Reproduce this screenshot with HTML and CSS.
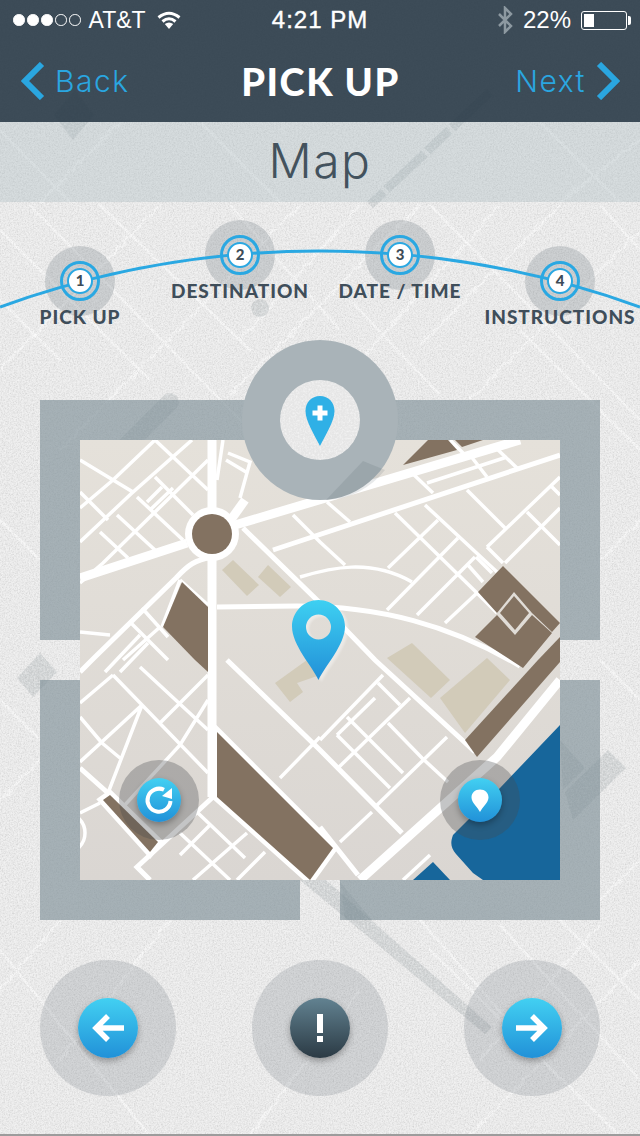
FILE: index.html
```html
<!DOCTYPE html>
<html lang="en">
  <head>
    <meta charset="UTF-8" />
    <meta name="viewport" content="width=device-width, initial-scale=1.0" />
    <title>Pick Up - Map</title>
    <link rel="stylesheet" href="styles.css">
  </head>
  <body>
    <div class="page">
      <!-- paper texture, worn street lines and faded shapes behind everything -->
      <svg class="paper" width="640" height="1136" viewBox="0 0 640 1136">
        <defs>
          <filter id="grain" x="0" y="0" width="100%" height="100%">
            <feTurbulence type="fractalNoise" baseFrequency="0.75" numOctaves="3" seed="4" />
            <feColorMatrix type="matrix" values="0 0 0 0 0.4  0 0 0 0 0.4  0 0 0 0 0.4  1.8 0 0 0 -0.72" />
          </filter>
          <filter id="grainLight" x="0" y="0" width="100%" height="100%">
            <feTurbulence type="fractalNoise" baseFrequency="0.55" numOctaves="2" seed="11" />
            <feColorMatrix type="matrix" values="0 0 0 0 1  0 0 0 0 1  0 0 0 0 1  0 2.2 0 0 -0.85" />
          </filter>
          <filter id="rough" x="-5%" y="-5%" width="110%" height="110%">
            <feTurbulence type="fractalNoise" baseFrequency="0.12" numOctaves="2" seed="7" />
            <feDisplacementMap in="SourceGraphic" scale="5" />
          </filter>
        </defs>
        <rect class="paper-base" width="640" height="1136" />
        <g class="worn-lines" filter="url(#rough)">
          <path d="M0 230 L150 380 M30 205 L240 420 M160 205 L0 370 M300 205 L60 450 M420 205 L230 395" />
          <path d="M430 205 L640 420 M560 205 L420 345 M640 230 L470 400 M520 330 L640 450 M600 205 L640 250" />
          <path d="M100 205 L250 350 M230 205 L340 330 M360 205 L240 340 M500 205 L360 360 M0 300 L60 360 M350 300 L440 395" />
          <path d="M0 520 L40 560 M0 700 L40 740 M40 760 L0 800 M0 950 L150 1136 M60 920 L0 990" />
          <path d="M600 560 L640 520 M600 660 L640 700 M640 860 L600 900 M470 1136 L640 960 M430 950 L620 1136 M560 920 L640 1000" />
          <path d="M170 920 L60 1060 M250 1136 L360 990 M420 920 L560 1080 M500 925 L640 1080 M600 925 L480 1060" />
          <path d="M0 130 L70 202 M120 122 L40 202 M200 122 L280 202 M540 122 L620 202 M640 140 L560 202" />
        </g>
        <g class="faded">
          <polygon points="75,90 94,115 73,140 54,115" />
          <path class="faded-dash" d="M490 92 L370 205" />
          <circle cx="260" cy="308" r="9" />
          <path class="faded-strip" d="M170 402 L108 464" />
          <polygon points="40,653 57,672 33,697 17,678" />
          <polygon points="608,750 626,768 573,820 565,792" />
          <polygon points="560,740 585,768 563,790" />
          <polygon points="300,880 326,880 492,1027 485,1034" />
          <polygon points="340,882 372,920 345,920" />
        </g>
        <rect class="paper-grain" width="640" height="1136" filter="url(#grain)" />
        <rect class="paper-grain-light" width="640" height="1136" filter="url(#grainLight)" />
      </svg>

      <div class="top-bar">
        <div class="status-bar">
          <div class="status-left">
            <div class="signal">
              <span class="dot on"></span>
              <span class="dot on"></span>
              <span class="dot on"></span>
              <span class="dot"></span>
              <span class="dot"></span>
            </div>
            <span>AT&amp;T</span>
            <svg class="wifi" width="24" height="18" viewBox="0 0 24 18">
              <path d="M1.500 6.500 Q12 -2 22.500 6.500 M5.500 10.500 Q12 5 18.500 10.500" />
              <path class="wifi-wedge" d="M12 18 L7.800 13 Q12 9.800 16.200 13 Z" />
            </svg>
          </div>
          <div class="status-time">4:21 PM</div>
          <div class="status-right">
            <svg class="bluetooth" width="16" height="28" viewBox="0 0 16 28">
              <path d="M2 8 L14 20 L8 26 V2 L14 8 L2 20" />
            </svg>
            <span>22%</span>
            <div class="battery"><div class="battery-fill"></div></div>
          </div>
        </div>
        <div class="nav-bar">
          <a class="nav-link">
            <svg class="chevron" width="24" height="38" viewBox="0 0 24 38">
              <path d="M21 2 L4 19 L21 36" />
            </svg>
            Back
          </a>
          <h1>PICK UP</h1>
          <a class="nav-link nav-link-next">
            Next
            <svg class="chevron" width="24" height="38" viewBox="0 0 24 38">
              <path d="M3 2 L20 19 L3 36" />
            </svg>
          </a>
        </div>
      </div>

      <h2 class="section-title">Map</h2>

      <div class="steps">
        <svg class="steps-arc" width="640" height="110" viewBox="0 0 640 110">
          <path d="M0 105 A942 942 0 0 1 640 105" />
        </svg>
        <div class="step step-low">
          <div class="step-halo"><div class="step-ring"><div class="step-num">1</div></div></div>
          <div class="step-label">PICK UP</div>
        </div>
        <div class="step">
          <div class="step-halo"><div class="step-ring"><div class="step-num">2</div></div></div>
          <div class="step-label">DESTINATION</div>
        </div>
        <div class="step">
          <div class="step-halo"><div class="step-ring"><div class="step-num">3</div></div></div>
          <div class="step-label">DATE / TIME</div>
        </div>
        <div class="step step-low">
          <div class="step-halo"><div class="step-ring"><div class="step-num">4</div></div></div>
          <div class="step-label">INSTRUCTIONS</div>
        </div>
      </div>

      <div class="map-frame">
        <svg class="frame-badge" width="160" height="160" viewBox="0 0 160 160">
          <defs>
            <clipPath id="holeClip">
              <circle cx="80" cy="80" r="40" />
            </clipPath>
          </defs>
          <ellipse class="badge-ring" cx="80" cy="80" rx="78" ry="80" />
          <path class="badge-shade" d="M86 160 L123 121 L145 130 A78 80 0 0 1 86 160 Z" />
          <circle class="badge-hole" cx="80" cy="80" r="40" />
          <g clip-path="url(#holeClip)">
            <rect class="badge-grain" width="160" height="160" filter="url(#grainLight)" />
          </g>
          <path class="badge-pin" d="M80 56 C71.500 56 65.500 62.500 65.500 71 C65.500 81 74 94 80 106 C86 94 94.500 81 94.500 71 C94.500 62.500 88.500 56 80 56 Z" />
          <path class="badge-plus" d="M80 65.500 V80.500 M72.500 73 H87.500" />
        </svg>

        <div class="map">
          <svg class="map-art" width="480" height="440" viewBox="0 0 480 440">
            <defs>
              <linearGradient id="ground" x1="0" y1="0" x2="0" y2="1">
                <stop offset="0" stop-color="#e5e1da" />
                <stop offset="1" stop-color="#dad6d2" />
              </linearGradient>
            </defs>
            <rect width="480" height="440" fill="url(#ground)" />

            <g class="tan">
              <polygon points="142,130 153,120 179,145 167,156" />
              <polygon points="178,137 188,125 211,147 200,157" />
              <polygon points="332,203 370,240 351,258 307,218" />
              <polygon points="360,258 407,218 430,240 385,293" />
              <polygon points="195,243 227,220 240,235 217,243 223,252 210,262" />
            </g>

            <g class="road thin">
              <path d="M0 20 L53 52 L112 0 M0 68 L33 40 L75 0 M75 0 L128 50 M128 20 L23 123 L0 143 M53 52 L0 102" />
              <path d="M75 37 L113 75 M57 57 L103 100 M37 75 L75 110 M20 92 L48 118 M0 52 L28 80 M82 47 L67 62 M93 48 L70 70" />
              <path d="M143 0 L137 40 M148 13 L170 22 L160 58 M146 20 L166 32" />
              <path d="M100 140 L128 165 M100 140 L82 187" />
              <path d="M0 192 L30 195 M62 168 L88 197 M50 182 L75 207 L88 220 M80 187 L43 220 M60 195 L25 232 M68 203 L40 232" />
              <path d="M60 227 L128 290 M33 235 L128 333 M128 235 L80 283 M128 260 L100 305 L43 367 M62 265 L0 322 M62 265 L28 353 M22 303 L40 318 M0 277 L22 303 M33 235 L0 263 M0 373 L20 363" />
              <path d="M118 373 L165 418 M100 393 L150 440 M167 393 L113 440 M185 412 L157 440 M130 385 L100 415" />
              <path d="M240 297 L200 338 M213 75 L240 102 L265 125 M247 62 L270 82 M220 137 C250 128 290 118 332 142" />
              <path d="M315 73 L397 153 L417 173 M358 80 L308 128 M378 98 L307 170 M395 117 L337 175 M397 153 L365 183 M396 117 L412 133 M388 125 L403 142" />
              <path d="M332 33 L353 53 M345 65 L417 132 M387 50 L425 88 M407 107 L480 37 M407 107 L423 123 M425 123 L480 68 M447 72 L480 105 M470 45 L480 55" />
              <path d="M347 43 L427 17 M390 15 L407 37 M415 7 L437 28 M370 0 L387 17" />
              <path d="M240 300 L303 235 M257 295 L310 348 M267 277 L323 333 M298 243 L320 265 M258 328 L330 258 M308 283 L342 318 L368 342 M367 297 L295 367 M292 372 L260 402 M257 295 L295 258 M267 277 L282 292" />
              <path d="M323 440 L350 415" />
              <circle cx="-15" cy="393" r="20" fill="none" />
            </g>

            <g class="road medium">
              <path d="M137 167 L217 166 C300 166 370 185 440 226" />
              <path d="M163 88 L240 163 L295 220 L380 298 L395 312 M147 220 L240 310 L322 393" />
              <path d="M193 110 L480 15" />
              <path d="M132 117 C115 120 108 125 96 138 L15 217 L0 232" />
              <path d="M0 328 L28 353 M133 357 L57 427 L70 440 M240 387 L278 435" />
            </g>

            <g class="road thick">
              <path d="M107 103 L0 138" />
              <path d="M155 85 L440 0" />
              <path d="M132 0 V357" />
              <path d="M165 60 L140 95" />
              <path d="M280 440 L417 317 L480 240" />
            </g>

            <g class="block">
              <polygon class="block-edged" points="137,292 253,408 230,440 137,357" />
              <polygon class="block-edged" points="23,360 30,355 78,402 70,412" />
              <polygon points="102,142 128,167 128,232 115,220 83,187" />
              <polygon points="323,25 348,0 368,0 377,10" />
              <polygon points="375,0 382,7 403,0" />
              <polygon points="398,152 423,126 480,183 472,192 452,173 434,152 417,173" />
              <polygon points="434,156 449,173 435,190 420,173" />
              <polygon points="395,197 417,175 435,195 452,175 472,193 443,228" />
              <polygon points="385,300 458,220 480,197 480,222 397,317" />
            </g>

            <circle class="plaza-ring" cx="132" cy="94" r="27" />
            <circle class="plaza" cx="132" cy="94" r="20" />

            <g class="water">
              <path d="M480 285 L420 348 L373 395 C370 403 371 408 376 414 L393 433 L403 440 H480 Z" />
              <polygon points="333,440 353,422 370,440" />
            </g>
          </svg>

          <svg class="map-pin" width="53" height="80" viewBox="0 0 53 80">
            <defs>
              <linearGradient id="pinBlue" x1="0" y1="0" x2="0" y2="1">
                <stop offset="0" stop-color="#3ed0f2" />
                <stop offset="1" stop-color="#2290d8" />
              </linearGradient>
            </defs>
            <path fill="url(#pinBlue)" fill-rule="evenodd" d="M26.500 0 C11.900 0 0 11.900 0 26.500 C0 45 20 66 26.500 80 C33 66 53 45 53 26.500 C53 11.900 41.100 0 26.500 0 Z M26.500 14.500 A12.500 12.500 0 1 1 26.500 39.500 A12.500 12.500 0 1 1 26.500 14.500 Z" />
          </svg>

          <div class="map-tool map-tool-refresh">
            <button class="round-btn small">
              <svg width="44" height="44" viewBox="0 0 44 44">
                <path class="icon-line" d="M33.500 23 A11.500 11.500 0 1 1 27 11.800" />
                <polygon class="icon-fill" points="25,18 35,21 35,10" />
              </svg>
            </button>
          </div>
          <div class="map-tool map-tool-locate">
            <button class="round-btn small">
              <svg width="44" height="44" viewBox="0 0 44 44">
                <path class="icon-fill" d="M22 11.500 C17 11.500 13.500 15 13.500 19.500 C13.500 24.500 19.500 29 22 34 C24.500 29 30.500 24.500 30.500 19.500 C30.500 15 27 11.500 22 11.500 Z" />
              </svg>
            </button>
          </div>
        </div>
      </div>

      <div class="actions">
        <div class="action-halo">
          <button class="round-btn">
            <svg width="60" height="60" viewBox="0 0 60 60">
              <path class="icon-arrow" d="M46 30 H19 M30 18 L18 30 L30 42" />
            </svg>
          </button>
        </div>
        <div class="action-halo">
          <button class="round-btn dark">
            <svg width="60" height="60" viewBox="0 0 60 60">
              <rect class="icon-fill" x="27" y="16" width="6" height="19" />
              <rect class="icon-fill" x="27" y="38" width="6" height="6" />
            </svg>
          </button>
        </div>
        <div class="action-halo">
          <button class="round-btn">
            <svg width="60" height="60" viewBox="0 0 60 60">
              <path class="icon-arrow" d="M14 30 H41 M30 18 L42 30 L30 42" />
            </svg>
          </button>
        </div>
      </div>
    </div>
  </body>
</html>
```

FILE: styles.css
```css
* {
  margin: 0;
  padding: 0;
  box-sizing: border-box;
}

body {
  width: 640px;
  height: 1136px;
  overflow: hidden;
  font-family: "Lato", "Open Sans", sans-serif;
  background: #e4e4e4;
}

.page {
  position: relative;
  width: 640px;
  height: 1136px;
  overflow: hidden;
  border-bottom: 2px solid #9c9c9c;
}

.paper {
  position: absolute;
  top: 0;
  left: 0;
}

.paper-base {
  fill: #ebebeb;
}

.worn-lines path {
  fill: none;
  stroke: rgba(255, 255, 255, 0.5);
  stroke-width: 2.500;
}

.faded polygon,
.faded circle {
  fill: rgba(70, 85, 95, 0.16);
}

.faded-dash {
  fill: none;
  stroke: rgba(70, 85, 95, 0.16);
  stroke-width: 9;
  stroke-dasharray: 52 4 30 4;
}

.faded-strip {
  fill: none;
  stroke: rgba(70, 85, 95, 0.16);
  stroke-width: 18;
  stroke-linecap: round;
}

.paper-grain {
  opacity: 0.4;
}

.paper-grain-light {
  opacity: 0.45;
}

/* top bar */
.top-bar {
  position: relative;
  height: 122px;
  background: rgba(41, 58, 71, 0.9);
  color: white;
}

.status-bar {
  height: 40px;
  padding: 0 8px 0 13px;
  display: flex;
  align-items: center;
  font-family: "Liberation Sans", sans-serif;
  font-size: 24px;
}

.status-left,
.status-right {
  flex: 1;
  display: flex;
  align-items: center;
}

.status-left {
  gap: 8px;
  font-size: 23px;
}

.status-right {
  justify-content: flex-end;
  gap: 10px;
}

.status-time {
  margin-right: 5px;
  letter-spacing: 1px;
  -webkit-text-stroke: 0.4px white;
}

.signal {
  display: flex;
  gap: 2.500px;
}

.dot {
  width: 11.500px;
  height: 11.500px;
  border: 1px solid white;
  border-radius: 50%;
}

.dot.on {
  background: white;
}

.wifi {
  margin-left: 3px;
}

.wifi path {
  fill: none;
  stroke: white;
  stroke-width: 3;
}

.wifi .wifi-wedge {
  fill: white;
  stroke: none;
}

.bluetooth path {
  fill: none;
  stroke: #8d99a1;
  stroke-width: 2.500;
}

.battery {
  position: relative;
  width: 46px;
  height: 19px;
  margin-right: 5px;
  padding: 2px;
  border: 1px solid white;
  border-radius: 3px;
}

.battery::after {
  content: "";
  position: absolute;
  top: 4px;
  right: -5px;
  width: 3px;
  height: 9px;
  background: white;
  border-radius: 0 2px 2px 0;
}

.battery-fill {
  width: 10px;
  height: 100%;
  background: white;
}

.nav-bar {
  height: 82px;
  padding: 0 20px 0 21px;
  display: flex;
  align-items: center;
}

.nav-bar h1 {
  font-size: 38px;
  font-weight: 900;
  letter-spacing: 1.500px;
}

.nav-link {
  flex: 1;
  display: flex;
  align-items: center;
  gap: 10px;
  color: #2aa6e0;
  font-family: "Inter", sans-serif;
  font-size: 30px;
  font-weight: 300;
  letter-spacing: 1.500px;
}

.nav-link-next {
  justify-content: flex-end;
}

.chevron path {
  fill: none;
  stroke: #2aa6e0;
  stroke-width: 6;
}

.section-title {
  position: relative;
  height: 80px;
  background: rgba(170, 185, 190, 0.36);
  color: #43525d;
  font-family: "Inter", sans-serif;
  font-size: 48px;
  font-weight: 300;
  line-height: 78px;
  letter-spacing: 1.500px;
  text-align: center;
}

/* steps along the arc */
.steps {
  position: relative;
  height: 198px;
  padding-top: 18px;
  display: grid;
  grid-template-columns: repeat(4, 160px);
  align-items: start;
}

.steps-arc {
  position: absolute;
  top: 0;
  left: 0;
  z-index: 1;
}

.steps-arc path {
  fill: none;
  stroke: #2aa8e2;
  stroke-width: 3;
}

.step {
  display: flex;
  flex-direction: column;
  align-items: center;
}

.step-low {
  margin-top: 26px;
}

.step-halo {
  width: 70px;
  height: 70px;
  border-radius: 50%;
  background: rgba(110, 120, 128, 0.26);
  display: flex;
  align-items: center;
  justify-content: center;
}

.step-ring {
  position: relative;
  z-index: 2;
  width: 40px;
  height: 40px;
  border: 3px solid #2aa8e2;
  border-radius: 50%;
  display: flex;
  align-items: center;
  justify-content: center;
}

.step-num {
  width: 26px;
  height: 26px;
  border: 2.500px solid #2aa8e2;
  border-radius: 50%;
  background: white;
  color: #3d4c58;
  font-size: 15px;
  font-weight: 900;
  line-height: 21px;
  text-align: center;
}

.step-label {
  position: relative;
  z-index: 2;
  margin-top: -9px;
  color: #3f4e5a;
  font-size: 19px;
  font-weight: 900;
  line-height: 20px;
  letter-spacing: 1px;
  white-space: nowrap;
}

/* map with its broken frame */
.map-frame {
  position: relative;
  width: 560px;
  height: 520px;
  margin: 0 auto;
  padding: 40px;
  background:
    linear-gradient(rgba(128, 145, 153, 0.66), rgba(128, 145, 153, 0.66)) 0 0 / 100% 240px no-repeat,
    linear-gradient(rgba(128, 145, 153, 0.66), rgba(128, 145, 153, 0.66)) 0 280px / 260px 240px no-repeat,
    linear-gradient(rgba(128, 145, 153, 0.66), rgba(128, 145, 153, 0.66)) 300px 280px / 260px 240px no-repeat;
}

.frame-badge {
  position: absolute;
  top: -60px;
  left: 200px;
  z-index: 3;
}

.badge-ring {
  fill: #a9b3b8;
}

.badge-shade {
  fill: rgba(60, 75, 85, 0.12);
}

.badge-hole {
  fill: #e6e6e6;
}

.badge-grain {
  opacity: 0.5;
}

.badge-pin {
  fill: #2fb0e6;
}

.badge-plus {
  fill: none;
  stroke: white;
  stroke-width: 5;
}

.map {
  position: relative;
  width: 480px;
  height: 440px;
  overflow: hidden;
}

.map-art {
  display: block;
}

.tan polygon {
  fill: #d2cbb9;
}

.road path,
.road circle {
  fill: none;
  stroke: white;
  stroke-linecap: butt;
}

.road.thin path,
.road.thin circle {
  stroke-width: 3.500;
}

.road.medium path {
  stroke-width: 5;
}

.road.thick path {
  stroke-width: 9;
}

.block polygon {
  fill: #837261;
}

.block .block-edged {
  stroke: white;
  stroke-width: 9;
  paint-order: stroke;
}

.plaza-ring {
  fill: white;
}

.plaza {
  fill: #837261;
}

.water path,
.water polygon {
  fill: #17669b;
}

.map-pin {
  position: absolute;
  top: 160px;
  left: 212px;
  filter: drop-shadow(3px 2px 1px rgba(255, 255, 255, 0.4));
}

.map-tool {
  position: absolute;
  top: 320px;
  width: 80px;
  height: 80px;
  border-radius: 50%;
  background: rgba(70, 75, 78, 0.32);
  display: flex;
  align-items: center;
  justify-content: center;
}

.map-tool-refresh {
  left: 39px;
}

.map-tool-locate {
  left: 360px;
}

/* round buttons */
.round-btn {
  width: 60px;
  height: 60px;
  border: none;
  border-radius: 50%;
  background: linear-gradient(#42d0f2, #2191d8);
  box-shadow: 0 3px 6px rgba(0, 0, 0, 0.3);
  display: flex;
  align-items: center;
  justify-content: center;
}

.round-btn.small {
  width: 44px;
  height: 44px;
}

.round-btn.dark {
  background: linear-gradient(#628291, #2b3a44);
}

.icon-line {
  fill: none;
  stroke: white;
  stroke-width: 4;
}

.icon-fill {
  fill: white;
}

.icon-arrow {
  fill: none;
  stroke: white;
  stroke-width: 5.500;
}

.actions {
  position: relative;
  margin-top: 40px;
  padding: 0 40px;
  display: flex;
  justify-content: space-between;
}

.action-halo {
  width: 136px;
  height: 136px;
  border-radius: 50%;
  background: rgba(110, 120, 128, 0.22);
  display: flex;
  align-items: center;
  justify-content: center;
}
```
